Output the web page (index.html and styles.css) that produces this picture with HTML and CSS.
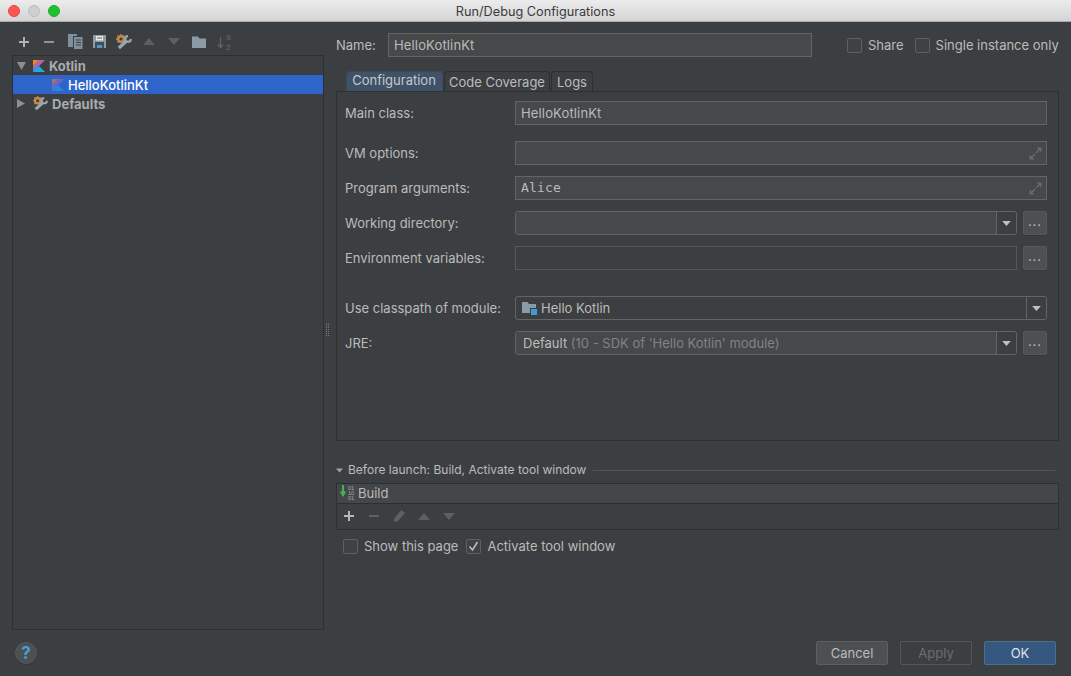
FILE: index.html
```html
<!DOCTYPE html>
<html lang="en">
<head>
<meta charset="utf-8">
<title>Run/Debug Configurations</title>
<link rel="stylesheet" href="styles.css">
</head>
<body>
<svg class="defs" width="0" height="0" aria-hidden="true">
  <defs>
    <linearGradient id="kg" x1="0" y1="1" x2="1" y2="0"><stop offset="0" stop-color="#6d7de8"/><stop offset="1" stop-color="#d9587e"/></linearGradient>
    <symbol id="kotlin" viewBox="0 0 12 12">
      <polygon points="0,0 6,0 0,6.3" fill="#f28a1e"/>
      <polygon points="6,0 12,0 0,12 0,6.3" fill="url(#kg)"/>
      <polygon points="6,6 12,12 0,12" fill="#21a6e8"/>
    </symbol>
    <symbol id="wrench" viewBox="0 0 16 16">
      <circle cx="5" cy="5" r="2.800" fill="none" stroke="#c08a4c" stroke-width="2.400"/>
      <path d="M5 0v2M0 5h2M1.500 1.500l1.500 1.500M8.500 1.500 7 3M1.500 8.500 3 7" stroke="#c08a4c" stroke-width="1.400"/>
      <path d="M2.800 14 10 7.500" stroke="#9aa7b0" stroke-width="3.200" fill="none"/>
      <path d="M12 2.200A2.800 2.800 0 1 0 14.800 5" stroke="#9aa7b0" stroke-width="2.200" fill="none"/>
    </symbol>
    <symbol id="expand" viewBox="0 0 13 13">
      <polygon points="12.500,.5 12.500,5.500 7.500,.5" fill="#696c6e"/>
      <path d="M10 3 7 6" stroke="#696c6e" stroke-width="1.500"/>
      <polygon points=".5,12.500 .5,7.500 5.500,12.500" fill="#696c6e"/>
      <path d="M3 10l3-3" stroke="#696c6e" stroke-width="1.500"/>
    </symbol>
    <symbol id="arrow-up" viewBox="0 0 12 7"><polygon points="6,0 12,7 0,7"/></symbol>
    <symbol id="arrow-down" viewBox="0 0 12 7"><polygon points="0,0 12,0 6,7"/></symbol>
  </defs>
</svg>
<div class="window">
  <header class="titlebar">
    <div class="lights">
      <span class="light red"></span><span class="light gray"></span><span class="light green"></span>
    </div>
    <div class="title">Run/Debug Configurations</div>
  </header>

  <main class="content">
    <section class="left">
      <div class="toolbar">
        <svg class="ti first" width="12" height="12" viewBox="0 0 12 12"><path d="M5 1h2v4h4v2H7v4H5V7H1V5h4z" fill="#afb1b3"/></svg>
        <svg class="ti" width="12" height="12" viewBox="0 0 12 12"><rect x="1" y="5" width="10" height="2" fill="#8f9396"/></svg>
        <svg class="ti copy" width="15" height="15" viewBox="0 0 15 15"><path d="M0 0h9v2H5v11H0z" fill="#7f909c"/><path d="M6 3h8.500v12H6z" fill="#7f909c"/><path d="M8 6h5M8 8.500h5M8 11h5" stroke="#3c3f41"/></svg>
        <svg class="ti save" width="13" height="13" viewBox="0 0 13 13"><path d="M0 0h13v13H0z" fill="#8f9ba3"/><rect x="3" y="1" width="7" height="4.500" fill="#e8eaeb"/><rect x="4" y="2.500" width="5" height="1" fill="#5a5d5f"/><rect x="2" y="7" width="9" height="6" fill="#4a4d4f"/><rect x="4" y="10" width="5" height="3" fill="#3f9fd6"/></svg>
        <svg class="ti wr" width="16" height="16"><use href="#wrench"/></svg>
        <svg class="ti dim" width="12" height="7"><use href="#arrow-up"/></svg>
        <svg class="ti dim" width="12" height="7"><use href="#arrow-down"/></svg>
        <svg class="ti folder" width="14" height="12" viewBox="0 0 14 12"><path d="M0 .5h6l1.500 2H14V12H0z" fill="#8a9ba6"/></svg>
        <svg class="ti sort" width="14" height="15" viewBox="0 0 14 15"><path d="M3.500 3v10M1 10.500l2.500 3 2.500-3" stroke="#5f6467" stroke-width="1.200" fill="none"/></svg>
        <span class="az"><span>a</span><span>z</span></span>
      </div>
      <div class="tree">
        <div class="node bold">
          <svg class="arrow" width="9" height="8" viewBox="0 0 12 7" preserveAspectRatio="none"><polygon points="0,0 12,0 6,7"/></svg>
          <svg class="node-icon" width="12" height="12"><use href="#kotlin"/></svg>
          <span>Kotlin</span>
        </div>
        <div class="node selected">
          <svg class="node-icon faded" width="12" height="12"><use href="#kotlin"/></svg>
          <span>HelloKotlinKt</span>
        </div>
        <div class="node bold">
          <svg class="arrow collapsed" width="8" height="9" viewBox="0 0 8 10" preserveAspectRatio="none"><polygon points="0,0 8,5 0,10"/></svg>
          <svg class="node-icon wide" width="15" height="15"><use href="#wrench"/></svg>
          <span>Defaults</span>
        </div>
      </div>
      <div class="splitter"></div>
    </section>

    <section class="right">
      <div class="name-row">
        <label class="name-label">Name:</label>
        <div class="field name-field">HelloKotlinKt</div>
        <label class="check share"><span class="box"></span>Share</label>
        <label class="check"><span class="box"></span>Single instance only</label>
      </div>

      <div class="tabs">
        <div class="tab active t1">Configuration</div>
        <div class="tab t2">Code Coverage</div>
        <div class="tab t3">Logs</div>
      </div>

      <div class="panel">
        <div class="row first-row"><label>Main class:</label><div class="field grow">HelloKotlinKt</div></div>
        <div class="row gap-l"><label>VM options:</label><div class="field grow"><svg class="expand" width="13" height="13"><use href="#expand"/></svg></div></div>
        <div class="row"><label>Program arguments:</label><div class="field grow mono">Alice<svg class="expand" width="13" height="13"><use href="#expand"/></svg></div></div>
        <div class="row"><label>Working directory:</label>
          <div class="combo grow filled"><span class="combo-text"></span><span class="drop"><svg width="9" height="5"><use href="#arrow-down"/></svg></span></div>
          <button class="more">...</button></div>
        <div class="row"><label>Environment variables:</label><div class="field grow plain"></div><button class="more">...</button></div>
        <div class="row gap-xl"><label>Use classpath of module:</label>
          <div class="combo grow"><span class="combo-text">
            <svg class="module" width="15" height="14" viewBox="0 0 15 14"><path d="M0 1h5.500l1.500 2h7v9H0z" fill="#8a9ba6"/><rect x="8" y="7" width="7" height="7" fill="#3c3f41"/><rect x="9" y="8" width="6" height="6" fill="#3d9fd0"/></svg><span>Hello Kotlin</span></span><span class="drop"><svg width="9" height="5"><use href="#arrow-down"/></svg></span></div></div>
        <div class="row"><label>JRE:</label>
          <div class="combo grow filled"><span class="combo-text"><span>Default <span class="muted">(10 - SDK of 'Hello Kotlin' module)</span></span></span><span class="drop"><svg width="9" height="5"><use href="#arrow-down"/></svg></span></div>
          <button class="more">...</button></div>
      </div>

      <div class="before-head">
        <svg width="7" height="5" class="tri"><use href="#arrow-down"/></svg>
        <span>Before launch: Build, Activate tool window</span>
        <span class="rule"></span>
      </div>
      <div class="before-box">
        <div class="build-row">
          <svg class="build-icon" width="16" height="16" viewBox="0 0 16 16"><path d="M3 0v8M.8 6.500 3 10l2.200-3.500" stroke="#4cae4f" stroke-width="2" fill="none"/><text x="8" y="5" class="bits">01</text><text x="8" y="10" class="bits">10</text><text x="8" y="15" class="bits">01</text></svg>
          <span>Build</span>
        </div>
        <div class="build-tools">
          <svg width="12" height="12" viewBox="0 0 12 12"><path d="M5 1h2v4h4v2H7v4H5V7H1V5h4z" fill="#b4b6b8"/></svg>
          <svg width="12" height="12" viewBox="0 0 12 12"><rect x="1" y="5" width="10" height="2" fill="#5d6163"/></svg>
          <svg width="12" height="12" viewBox="0 0 12 12"><path d="M8.500 0 12 3 5 11 .8 12 1.500 8z" fill="#5d6163"/></svg>
          <svg class="fade" width="12" height="7"><use href="#arrow-up"/></svg>
          <svg class="fade" width="12" height="7"><use href="#arrow-down"/></svg>
        </div>
      </div>
      <div class="options">
        <label class="check"><span class="box"></span>Show this page</label>
        <label class="check"><span class="box"><svg width="11" height="11" viewBox="0 0 11 11"><path d="M1.500 5.500 4.500 9 9.500 1" stroke="#bbbbbb" stroke-width="1.600" fill="none"/></svg></span>Activate tool window</label>
      </div>
    </section>
  </main>

  <footer class="footer">
    <button class="help">?</button>
    <div class="actions">
      <button class="btn">Cancel</button>
      <button class="btn disabled">Apply</button>
      <button class="btn primary">OK</button>
    </div>
  </footer>
</div>
</body>
</html>
```

FILE: styles.css
```css
* { box-sizing: border-box; }
html, body { margin: 0; padding: 0; }
body {
  width: 1071px;
  height: 676px;
  overflow: hidden;
  background: #3c3f41;
  color: #bbbbbb;
  font: 13px/16px Inter, "Liberation Sans", sans-serif;
}
.defs { position: absolute; }
.window { display: flex; flex-direction: column; height: 676px; }

/* title bar */
.titlebar {
  height: 22px;
  flex: none;
  display: flex;
  align-items: center;
  background: linear-gradient(#ececec, #d4d4d4);
  border-bottom: 1px solid #a9a9a9;
  position: relative;
}
.lights { display: flex; gap: 8px; padding-left: 8px; }
.light { width: 12px; height: 12px; border-radius: 50%; }
.red { background: #fc5753; border: 1px solid #df4744; }
.gray { background: #cfcfcf; border: 1px solid #bcbcbc; }
.green { background: #1fc133; border: 1px solid #1dad2b; }
.title {
  position: absolute;
  left: 0; right: 0; top: 4px;
  text-align: center;
  color: #3b3b3b;
  font-size: 12.700px;
}

/* layout */
.content {
  flex: 1;
  display: flex;
  padding: 0 12px;
  gap: 12px;
  min-height: 0;
}
.left {
  width: 312px;
  flex: none;
  display: flex;
  flex-direction: column;
  position: relative;
}
.right { flex: 1; min-width: 0; padding-top: 11px; }

/* left toolbar */
.toolbar {
  height: 33px;
  flex: none;
  display: flex;
  align-items: center;
  padding: 6px 0 0 6px;
}
.ti { flex: none; margin-right: 13px; }
.toolbar .copy { margin-right: 10px; }
.toolbar .save { margin-right: 10px; }
.toolbar .wr { margin-right: 11px; }
.toolbar .dim { fill: #5c6063; margin-right: 13px; }
.toolbar .folder { margin-right: 11px; margin-left: -1px; }
.toolbar .sort { margin-right: -5px; }
.az {
  display: flex;
  flex-direction: column;
  font-size: 9px;
  line-height: 10px;
  color: #5f6467;
}
.tree {
  flex: 1;
  border: 1px solid #2d2f30;
}
.node {
  height: 19px;
  display: flex;
  align-items: center;
  position: relative;
  white-space: nowrap;
}
.node.bold { font-weight: 700; padding-left: 20px; color: #a9abad; }
.node.selected { background: #2f65ca; color: #fff; font-weight: 500; padding-left: 39px; }
.node-icon { margin-right: 4px; flex: none; }
.node-icon.wide { margin-right: 4px; }
.node-icon.faded { opacity: .55; }
.arrow { position: absolute; left: 4px; top: 6px; fill: #8c8f91; }
.arrow.collapsed { top: 5px; }
.splitter {
  position: absolute;
  left: 314px;
  top: 301px;
  width: 3px;
  height: 14px;
  background:
    linear-gradient(to right, transparent 1px, #3c3f41 1px, #3c3f41 2px, transparent 2px),
    repeating-linear-gradient(to bottom, #75787a 0, #75787a 1px, transparent 1px, transparent 2px);
}

/* name row */
.name-row { display: flex; align-items: center; height: 24px; }
.name-label { width: 52px; flex: none; }
.field {
  height: 24px;
  background: #45494a;
  border: 1px solid #646464;
  padding: 3px 5px;
  position: relative;
  white-space: nowrap;
  letter-spacing: .15px;
}
.name-field { width: 424px; flex: none; margin-right: 35px; }
.check { display: flex; align-items: center; white-space: nowrap; }
.share { margin-right: 11px; }
.box {
  width: 15px;
  height: 15px;
  flex: none;
  margin-right: 6px;
  border: 1px solid #5e6163;
  border-radius: 2px;
  background: #3f4244;
  display: flex;
  align-items: center;
  justify-content: center;
}

/* tabs */
.tabs {
  display: flex;
  gap: 1px;
  height: 20px;
  margin: 14px 0 0 10px;
}
.tab {
  border: 1px solid #2d2f31;
  border-bottom: 0;
  border-radius: 4px 4px 0 0;
  padding: 2px 0 0;
  text-align: center;
  line-height: 17px;
}
.t1 { width: 97px; }
.t2 { width: 106px; }
.t3 { width: 42px; }
.tab.active {
  background: #3f5268;
  padding: 0 1px 0 0;
  border-color: #3a4858;
  color: #c4c8cc;
}

/* panel */
.panel {
  height: 350px;
  border: 1px solid #2d2f31;
  padding: 9px 11px 0 8px;
}
.row { display: flex; align-items: center; height: 24px; margin-top: 11px; }
.row.first-row { margin-top: 0; }
.row.gap-l { margin-top: 16px; }
.row.gap-xl { margin-top: 26px; }
.row label { width: 170px; flex: none; white-space: nowrap; }
.grow { flex: 1; min-width: 0; }
.mono { font: 13px/16px "DejaVu Sans Mono", "Liberation Mono", monospace; letter-spacing: .2px; }
.plain { background: #3c3f41; border-color: #555759; }
.expand { position: absolute; right: 4px; top: 5px; }

.combo {
  height: 24px;
  display: flex;
  border: 1px solid #646464;
  border-radius: 3px;
  overflow: hidden;
}
.combo.filled .combo-text { background: #45494a; }
.combo-text {
  flex: 1;
  display: flex;
  align-items: center;
  padding-left: 7px;
  white-space: pre;
}
.module { margin-left: -1px; margin-right: 4px; }
.muted { color: #808386; }
.drop {
  width: 20px;
  flex: none;
  border-left: 1px solid #646464;
  background: #3c3f41;
  display: flex;
  align-items: center;
  justify-content: center;
  fill: #c0c0c0;
}
.more {
  width: 24px;
  height: 24px;
  flex: none;
  margin-left: 6px;
  padding: 0 0 4px;
  border: 1px solid #54585a;
  border-radius: 2px;
  background: #4c5052;
  box-shadow: 0 1px 0 #35383a;
  color: #bbbbbb;
  letter-spacing: 1px;
  font: 13px/14px Inter, "Liberation Sans", sans-serif;
}

/* before launch */
.before-head {
  display: flex;
  align-items: center;
  height: 16px;
  margin-top: 21px;
  font-size: 12px;
}
.tri { fill: #a0a2a4; margin-right: 5px; flex: none; }
.rule { flex: 1; height: 1px; background: #515456; margin: 0 4px 0 7px; }
.before-box { margin-top: 5px; border: 1px solid #2d2f31; height: 47px; }
.build-row {
  height: 20px;
  display: flex;
  align-items: center;
  gap: 2px;
  padding: 0 0 1px 3px;
  background: #434749;
  border-bottom: 1px solid #2d2f31;
}
.build-icon { flex: none; }
.bits { font: 5.500px "Liberation Sans", sans-serif; fill: #a9abad; }
.build-tools {
  height: 25px;
  display: flex;
  align-items: center;
  gap: 13px;
  padding: 0 0 1px 6px;
}
.fade { fill: #5c6063; }
.options {
  display: flex;
  gap: 8px;
  margin-top: 8px;
  padding-left: 7px;
}

/* footer */
.footer {
  height: 46px;
  flex: none;
  padding: 11px 15px;
  display: flex;
  justify-content: space-between;
  align-items: flex-start;
}
.help {
  width: 22px;
  height: 22px;
  margin-top: 1px;
  padding: 0;
  border: 1px solid #55595b;
  border-radius: 50%;
  background: #4c5052;
  box-shadow: 0 1px 0 #333638;
  color: #4a9fd0;
  font: 700 17px/20px Inter, "Liberation Sans", sans-serif;
}
.actions { display: flex; gap: 12px; }
.btn {
  width: 72px;
  height: 24px;
  padding: 0;
  border: 1px solid #5e6060;
  border-radius: 2px;
  background: #4c5052;
  color: #bbbbbb;
  font: 13px/16px Inter, "Liberation Sans", sans-serif;
}
.btn.disabled { background: transparent; border-color: #54575a; color: #6b6e70; }
.btn.primary { background: #365880; border-color: #4c708c; color: #dfe3e8; }
```
